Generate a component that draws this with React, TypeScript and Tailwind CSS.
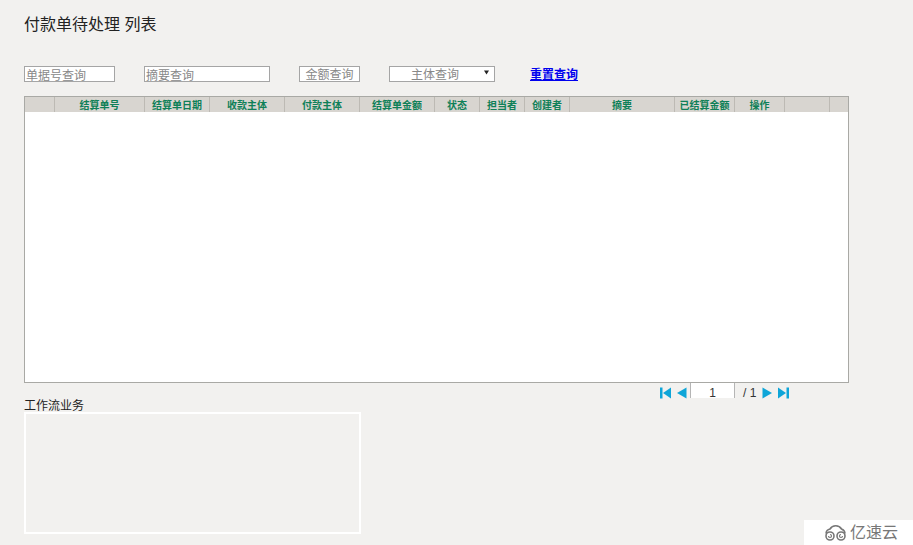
const columns = [
  { label: '', width: 30 },
  { label: '结算单号', width: 90 },
  { label: '结算单日期', width: 65 },
  { label: '收款主体', width: 75 },
  { label: '付款主体', width: 75 },
  { label: '结算单金额', width: 75 },
  { label: '状态', width: 45 },
  { label: '担当者', width: 45 },
  { label: '创建者', width: 45 },
  { label: '摘要', width: 105 },
  { label: '已结算金额', width: 60 },
  { label: '操作', width: 50 },
  { label: '', width: 45 },
  { label: '', width: 18 },
]

const font = "font-['Liberation_Sans','Noto_Sans_CJK_SC',sans-serif]"

function Pager({ dir, end }: { dir: 'left' | 'right'; end?: boolean }) {
  return (
    <svg width="11" height="12" viewBox="0 0 11 12" className="block">
      {dir === 'left' ? (
        <>
          {end && <rect x="0" y="0.5" width="2.5" height="11" fill="#0ea5d8" />}
          <polygon points={end ? '11,0.5 11,11.5 3,6' : '10.5,0.5 10.5,11.5 1,6'} fill="#0ea5d8" />
        </>
      ) : (
        <>
          <polygon points={end ? '0,0.5 0,11.5 8,6' : '0.5,0.5 0.5,11.5 10,6'} fill="#0ea5d8" />
          {end && <rect x="8.5" y="0.5" width="2.5" height="11" fill="#0ea5d8" />}
        </>
      )}
    </svg>
  )
}

export default function App() {
  return (
    <div className={`${font} relative w-[913px] h-[545px] overflow-hidden bg-[#f2f1ef] pl-6 text-[#222]`}>
      <h1 className="pt-[15px] h-[66px] text-[16px] leading-[20px] font-normal text-[#222]">付款单待处理 列表</h1>

      <div className="flex items-center h-[16px] text-[12px] text-[#888]">
        <input
          readOnly
          placeholder="单据号查询"
          className="w-[91px] h-[16px] bg-white border border-[#a5a5a5] pl-[1px] pt-[3px] text-[12px] leading-[14px] placeholder:text-[#888] outline-none"
        />
        <input
          readOnly
          placeholder="摘要查询"
          className="ml-[29px] w-[126px] h-[16px] bg-white border border-[#a5a5a5] pl-[1px] pt-[3px] text-[12px] leading-[14px] placeholder:text-[#888] outline-none"
        />
        <div className="ml-[29px] w-[61px] h-[16px] bg-white border border-[#a5a5a5] text-center leading-[16px]">金额查询</div>
        <div className="ml-[29px] w-[106px] h-[16px] bg-white border border-[#a5a5a5] flex items-start leading-[16px]">
          <span className="flex-1 text-center pr-[4px]">主体查询</span>
          <svg width="5" height="5" viewBox="0 0 5 5" className="mr-[5px] mt-[3px]">
            <polygon points="0,0.5 5,0.5 2.5,4.5" fill="#222" />
          </svg>
        </div>
        <a href="#" className="ml-[35px] pt-[2px] text-[12px] leading-[18px] font-bold text-[#0000ee] underline">
          重置查询
        </a>
      </div>

      <div className="mt-[14px] w-[825px] h-[287px] bg-white border border-[#a9a9a5]">
        <div className="flex h-[15px] bg-[#d8d5d0]">
          {columns.map((col, i) => (
            <div
              key={i}
              style={{ width: col.width }}
              className={`shrink-0 text-center text-[10px] leading-[17px] font-bold text-[#0f8058] ${
                i < columns.length - 1 ? 'border-r border-[#bdbab4]' : ''
              }`}
            >
              {col.label}
            </div>
          ))}
        </div>
      </div>

      <div className="relative h-[15px]">
        <div className="absolute left-[636px] top-0 flex items-start h-[15px] text-[12px] text-[#333]">
          <span className="mt-[4px]">
            <Pager dir="left" end />
          </span>
          <span className="ml-[5px] mt-[4px]">
            <Pager dir="left" />
          </span>
          <div className="ml-[3px] w-[45px] h-[15px] bg-white border-x border-[#b5b5b5] text-center leading-[21px]">1</div>
          <span className="ml-[8px] leading-[21px]">/ 1</span>
          <span className="ml-[6px] mt-[4px]">
            <Pager dir="right" />
          </span>
          <span className="ml-[5px] mt-[4px]">
            <Pager dir="right" end />
          </span>
        </div>
      </div>

      <div className="text-[12px] leading-[14px] pt-[1px] h-[14px] text-[#222]">工作流业务</div>
      <div className="w-[337px] h-[122px] border-2 border-white" />

      <div className="absolute right-0 bottom-0 w-[109px] h-[25px] bg-white flex items-center pl-[19px]">
        <svg width="25" height="18" viewBox="0 0 25 18" fill="none" stroke="#777" strokeWidth="1.6">
          <path d="M3 9.5 A5 5 0 0 1 7 5 A6.5 6 0 0 1 18.5 5 A5 5 0 0 1 22 9.5" />
          <circle cx="7" cy="12" r="4" />
          <circle cx="18" cy="12" r="4" />
          <path d="M7 10.5 A1.5 1.5 0 1 1 5.5 12 M18 10.5 A1.5 1.5 0 1 0 19.5 12" strokeWidth="1.2" />
        </svg>
        <span className="ml-[2px] text-[16px] leading-[20px] text-[#777]">亿速云</span>
      </div>
    </div>
  )
}
